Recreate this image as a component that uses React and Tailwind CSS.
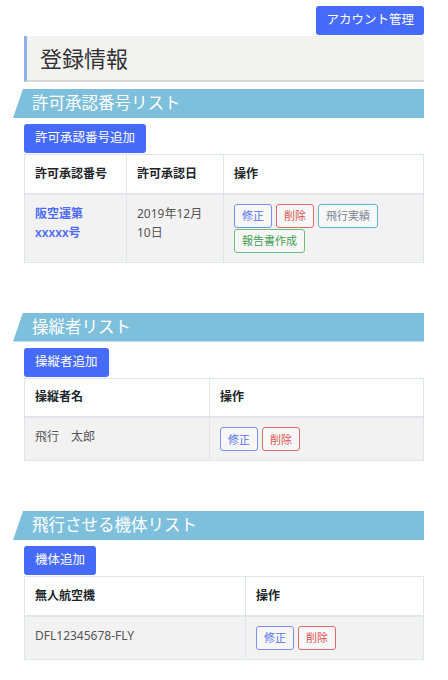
const font = { fontFamily: '"Noto Sans", "Noto Sans CJK JP", sans-serif' };

function SectionBar({ children }) {
  return (
    <div className="mt-[7px] ml-[-11px] h-[29px] bg-[#7ebfdc] [clip-path:polygon(10px_0,100%_0,100%_100%,0_100%)] flex items-center pl-[19px] text-[16.5px] text-white leading-none">
      {children}
    </div>
  );
}

function AddButton({ children }) {
  return (
    <div className="mt-[6px] flex">
      <button className="h-[29px] px-[11px] rounded-[3px] bg-[#466bfb] text-white text-[12.5px] leading-none">
        {children}
      </button>
    </div>
  );
}

const outline = {
  blue: "border-[#7d8ffb] text-[#5a72f0]",
  red: "border-[#dc6b6b] text-[#d9534f]",
  teal: "border-[#6bb6cc] text-[#7b8590]",
  green: "border-[#6bbf7a] text-[#3f9e52]",
};

function SmallButton({ color, children }) {
  return (
    <button className={`h-[24px] px-[7px] rounded-[3px] border bg-white/40 text-[11px] leading-none ${outline[color]}`}>
      {children}
    </button>
  );
}

function Table({ cols, heads, children }) {
  return (
    <table className="w-full mt-px border-collapse table-fixed text-[12px]">
      <colgroup>
        {cols.map((w, i) => (
          <col key={i} style={w ? { width: w } : undefined} />
        ))}
      </colgroup>
      <thead>
        <tr className="bg-white">
          {heads.map((h) => (
            <th key={h} className="h-[39px] px-[10px] border border-[#e1e5ea] border-b-2 text-left font-bold text-[#212529] align-middle">
              {h}
            </th>
          ))}
        </tr>
      </thead>
      <tbody>{children}</tbody>
    </table>
  );
}

const td = "px-[10px] py-[9px] border border-[#e1e5ea] align-top bg-[#f2f2f2] leading-[19px]";

export default function App() {
  return (
    <div className="min-h-screen bg-white px-6 pt-[6px] pb-6" style={font}>
      <div className="flex justify-end">
        <button className="h-[29px] px-[10px] rounded-[3px] bg-[#466bfb] text-white text-[12.5px] leading-none">
          アカウント管理
        </button>
      </div>

      <div className="mt-px h-[46px] bg-[#f2f2f1] border-l-[3px] border-l-[#8fb0e4] border-b-2 border-b-[#d6d6d6] flex items-center pl-[13px]">
        <h1 className="text-[22px] text-[#333] leading-none">登録情報</h1>
      </div>

      {/* 許可承認番号 */}
      <SectionBar>許可承認番号リスト</SectionBar>
      <AddButton>許可承認番号追加</AddButton>
      <Table cols={["102px", "97px", null]} heads={["許可承認番号", "許可承認日", "操作"]}>
        <tr>
          <td className={td + " text-[#4d6bf5] font-semibold"}>
            阪空運第<br />xxxxx号
          </td>
          <td className={td + " text-[#555]"}>
            2019年12月<br />10日
          </td>
          <td className={td}>
            <div className="flex flex-wrap gap-x-[4px] gap-y-px">
              <SmallButton color="blue">修正</SmallButton>
              <SmallButton color="red">削除</SmallButton>
              <SmallButton color="teal">飛行実績</SmallButton>
              <SmallButton color="green">報告書作成</SmallButton>
            </div>
          </td>
        </tr>
      </Table>

      {/* 操縦者 */}
      <div className="mt-[50px]">
        <SectionBar>操縦者リスト</SectionBar>
      </div>
      <AddButton>操縦者追加</AddButton>
      <Table cols={["185px", null]} heads={["操縦者名", "操作"]}>
        <tr>
          <td className={td + " text-[#555]"}>飛行　太郎</td>
          <td className={td}>
            <div className="flex gap-[4px]">
              <SmallButton color="blue">修正</SmallButton>
              <SmallButton color="red">削除</SmallButton>
            </div>
          </td>
        </tr>
      </Table>

      {/* 機体 */}
      <div className="mt-[50px]">
        <SectionBar>飛行させる機体リスト</SectionBar>
      </div>
      <AddButton>機体追加</AddButton>
      <Table cols={["221px", null]} heads={["無人航空機", "操作"]}>
        <tr>
          <td className={td + " text-[#555]"}>DFL12345678-FLY</td>
          <td className={td}>
            <div className="flex gap-[4px]">
              <SmallButton color="blue">修正</SmallButton>
              <SmallButton color="red">削除</SmallButton>
            </div>
          </td>
        </tr>
      </Table>
    </div>
  );
}
